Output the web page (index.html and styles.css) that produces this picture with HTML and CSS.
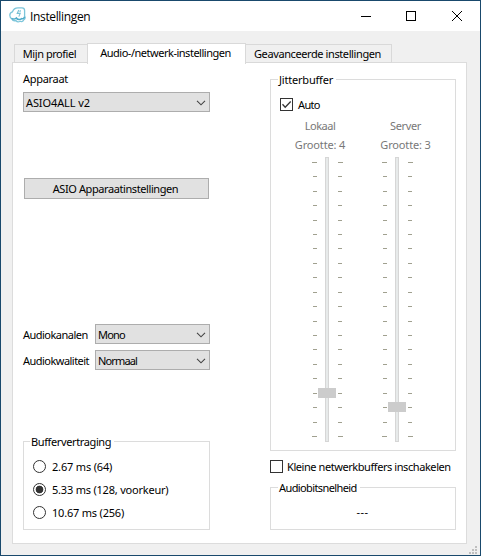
FILE: index.html
```
<!DOCTYPE html>
<html lang="nl">
<head>
<meta charset="utf-8">
<title>Instellingen</title>
<link rel="stylesheet" href="styles.css">
</head>
<body>
<div class="window">
  <header class="titlebar">
    <svg class="logo" width="18" height="18" viewBox="0 0 18 18">
      <path d="M3.500 5.800C4.300 3.200 6.500 1.800 9 1.800H13C14.800 1.800 15.600 3 15.600 4.500V10C16.500 11.500 16.200 13 14.800 13.800 14.200 15.500 12.500 16 11.200 15.300 9.500 16.300 7.800 15.800 7 14.600 5 15 3.500 14.500 3 13 1.300 12.200 .8 10.800 .8 9.300 .8 7.500 1.800 6.200 3.500 5.800Z" fill="#fff" stroke="#7cc5da" stroke-width="1.300"/>
      <path d="M2.500 12.400C4 13.300 6 13.200 7.300 12C8.500 14 11.500 14 12.800 12.600C14 13 15.200 12.300 15.600 10.800" fill="none" stroke="#4fabc9" stroke-width="1.500"/>
      <path d="M9.800 4L8.200 7.400H11.200L9.800 10.600M11.500 4.200L10.800 6" fill="none" stroke="#79c1d5" stroke-width="1.100"/>
    </svg>
    <h1 class="title">Instellingen</h1>
    <svg class="controls" width="104" height="12" viewBox="0 0 104 12" fill="none" stroke="#000">
      <path d="M0 6.500H10"/><rect x="45.500" y="1.500" width="9" height="9"/><path d="M91 1L101 11M101 1L91 11"/>
    </svg>
  </header>
  <nav class="tabs">
    <div class="tab tab-profile"><span class="t-profile">Mijn profiel</span></div>
    <div class="tab tab-active"><span class="t-audio">Audio-/netwerk-instellingen</span></div>
    <div class="tab tab-advanced"><span class="t-advanced">Geavanceerde instellingen</span></div>
  </nav>
  <main class="pane">
    <section class="left">
      <div class="label t-device">Apparaat</div>
      <div class="combo device"><span class="t-asio">ASIO4ALL v2</span><svg class="chevron" width="10" height="6" viewBox="0 0 10 6"><path d="M1 .8L5 4.800L9 .8"/></svg></div>
      <div class="button"><span class="t-button">ASIO Apparaatinstellingen</span></div>
      <div class="field channels"><span class="field-name t-channels">Audiokanalen</span><div class="combo"><span class="t-mono">Mono</span><svg class="chevron" width="10" height="6" viewBox="0 0 10 6"><path d="M1 .8L5 4.800L9 .8"/></svg></div></div>
      <div class="field"><span class="field-name t-quality">Audiokwaliteit</span><div class="combo"><span class="t-normal">Normaal</span><svg class="chevron" width="10" height="6" viewBox="0 0 10 6"><path d="M1 .8L5 4.800L9 .8"/></svg></div></div>
      <div class="group delay">
        <div class="legend"><span class="t-delay">Buffervertraging</span></div>
        <div class="option"><i class="radio"></i><span class="t-o1">2.67 ms (64)</span></div>
        <div class="option"><i class="radio on"></i><span class="t-o2">5.33 ms (128, voorkeur)</span></div>
        <div class="option"><i class="radio"></i><span class="t-o3">10.67 ms (256)</span></div>
      </div>
    </section>
    <section class="right">
      <div class="group jitter">
        <div class="legend"><span class="t-jitter">Jitterbuffer</span></div>
        <div class="check-row"><svg class="check" width="13" height="13" viewBox="0 0 13 13"><rect x=".5" y=".5" width="12" height="12"/><path d="M2.500 6.300L5.200 9.200L10.700 3.500"/></svg><span class="t-auto">Auto</span></div>
        <div class="sliders">
          <div class="slider local">
            <span class="t-local">Lokaal</span><span class="t-size">Grootte: 4</span>
            <svg width="32" height="286" viewBox="0 0 32 286"><use href="#scale"/><rect class="knob" x="6" y="232" width="18" height="10"/></svg>
          </div>
          <div class="slider server">
            <span class="t-server">Server</span><span class="t-size">Grootte: 3</span>
            <svg width="32" height="286" viewBox="0 0 32 286">
              <defs><g id="scale">
                <rect class="groove" x="13.500" y="1.500" width="3" height="284"/>
                <path class="ticks" d="M0 6.500h5M26 6.500h5M1 20.500h4M26 20.500h4M1 35.500h4M26 35.500h4M1 49.500h4M26 49.500h4M1 64.500h4M26 64.500h4M1 78.500h4M26 78.500h4M1 92.500h4M26 92.500h4M1 107.500h4M26 107.500h4M1 121.500h4M26 121.500h4M1 136.500h4M26 136.500h4M1 150.500h4M26 150.500h4M1 165.500h4M26 165.500h4M1 179.500h4M26 179.500h4M1 193.500h4M26 193.500h4M1 208.500h4M26 208.500h4M1 222.500h4M26 222.500h4M1 237.500h4M26 237.500h4M1 251.500h4M26 251.500h4M1 266.500h4M26 266.500h4M0 280.500h5M26 280.500h5"/>
              </g></defs>
              <use href="#scale"/><rect class="knob" x="6" y="246" width="18" height="10"/></svg>
          </div>
        </div>
      </div>
      <div class="check-row small"><svg class="check" width="13" height="13" viewBox="0 0 13 13"><rect x=".5" y=".5" width="12" height="12"/></svg><span class="t-small">Kleine netwerkbuffers inschakelen</span></div>
      <div class="group bitrate">
        <div class="legend"><span class="t-bitrate">Audiobitsnelheid</span></div>
        <div class="value">---</div>
      </div>
    </section>
  </main>
  <svg class="grip" width="8" height="8" viewBox="0 0 8 8"><path d="M6 0h2v2H6zM3 3h2v2H3zM6 3h2v2H6zM0 6h2v2H0zM3 6h2v2H3zM6 6h2v2H6z"/></svg>
</div>
</body>
</html>
```
FILE: styles.css
```
* { box-sizing: border-box; }
body { margin: 0; font: 11px/16px "Noto Sans", sans-serif; color: #000; }
span { white-space: nowrap; }
svg { display: block; flex: none; }
.window { position: relative; width: 481px; height: 556px; border: 1px solid #19496c; background: #f0f0f0; }
.titlebar { display: flex; align-items: center; height: 30px; padding: 0 17px 0 8px; background: #fff; }
.logo { margin-top: -2px; }
.title { margin: 0 auto 0 3px; padding-top: 1px; font: 12px/16px "Open Sans", sans-serif; letter-spacing: -.35px; }
.controls { margin: -1px -2px 0 0; }
.tabs { display: flex; align-items: flex-end; height: 32px; padding-left: 13px; }
.tab { display: flex; justify-content: center; align-items: center; height: 19px; border: 1px solid #d9d9d9; }
.tab-profile { width: 73px; padding-right: 3px; border-right: 0; }
.tab-active { position: relative; width: 159px; height: 21px; margin-bottom: -1px; padding: 0 2px 2px 0; background: #fff; border-bottom: 0; }
.tab-advanced { width: 146px; padding-right: 2px; border-left: 0; }
.pane { display: flex; justify-content: space-between; width: 455px; height: 482px; margin-left: 11px; padding: 0 10px; border: 1px solid #dcdcdc; background: #fff; margin-top: -1px; }
.left { width: 187px; padding-top: 8px; }
.right { width: 186px; padding-top: 16px; }
.combo { display: flex; align-items: center; justify-content: space-between; width: 115px; height: 20px; padding: 0 3px 0 2px; border: 1px solid #adadad; background: #e1e1e1; }
.combo span { padding-top: 2px; }
.combo.device { width: 187px; margin-top: 5px; }
.chevron { margin-top: 1px; fill: none; stroke: #444; stroke-width: 1.1; }
.button { display: flex; align-items: center; justify-content: center; width: 185px; height: 21px; margin: 66px 0 0 1px; padding-right: 2px; border: 1px solid #adadad; background: #e1e1e1; }
.field { display: flex; align-items: center; justify-content: space-between; height: 20px; margin-top: 6px; }
.field-name { padding-top: 2px; }
.field.channels { margin-top: 125px; }
.group { border: 1px solid #dcdcdc; }
.legend { height: 16px; margin-top: -8px; padding-left: 7px; }
.legend span { display: inline-block; padding: 0 3px 0 1px; background: #fff; }
.delay { height: 89px; margin-top: 71px; }
.delay .legend { padding-left: 6px; }
.option { display: flex; align-items: center; gap: 6px; height: 23px; padding-left: 9px; }
.legend + .option { margin-top: 5px; }
.radio { width: 13px; height: 13px; border: 1px solid #333; border-radius: 50%; }
.radio.on { background: radial-gradient(circle, #333 3.500px, #fff 4.200px); }
.jitter { height: 372px; }
.check-row { display: flex; align-items: center; gap: 5px; height: 15px; }
.jitter .check-row { margin: 9px 0 0 9px; }
.check { fill: none; stroke: #333; }
.check path { stroke-width: 1.300; }
.sliders { display: flex; gap: 16px; margin: 6px 0 0 14px; color: #787878; }
.slider { display: flex; flex-direction: column; align-items: center; width: 70px; }
.slider span { height: 19px; }
.slider.local svg { margin-left: 16px; }
.slider.server svg { margin-right: 16px; }
.slider.server span { margin-right: 1px; }
.groove { fill: #e7eaea; stroke: #d6d6d6; }
.ticks { stroke: #a0a08f; }
.knob { fill: #ccc; }
.check-row.small { margin-top: 8px; gap: 4px; }
.bitrate { height: 43px; margin-top: 13px; }
.value { margin-top: 8px; padding-right: 1px; text-align: center; letter-spacing: .4px; }
.grip { position: absolute; right: 3px; bottom: 1px; fill: #bfbfbf; }
.t-profile { letter-spacing: -.45px; }
.t-audio { letter-spacing: -.48px; }
.t-advanced { letter-spacing: -.4px; }
.t-device { letter-spacing: -.3px; }
.t-asio { letter-spacing: -.1px; }
.t-button { letter-spacing: -.41px; }
.t-channels { letter-spacing: -.52px; }
.t-quality { letter-spacing: -.53px; }
.t-mono { letter-spacing: -.8px; }
.t-normal { letter-spacing: -.85px; }
.t-delay { letter-spacing: -.38px; }
.t-o1 { letter-spacing: -.18px; }
.t-o2 { letter-spacing: -.21px; }
.t-o3 { letter-spacing: -.2px; }
.t-jitter { letter-spacing: -.2px; }
.t-auto { letter-spacing: -.65px; }
.t-local { letter-spacing: -.5px; }
.t-server { letter-spacing: -.35px; }
.t-size { letter-spacing: -.15px; }
.t-small { letter-spacing: -.43px; }
.t-bitrate { letter-spacing: -.6px; }
```
